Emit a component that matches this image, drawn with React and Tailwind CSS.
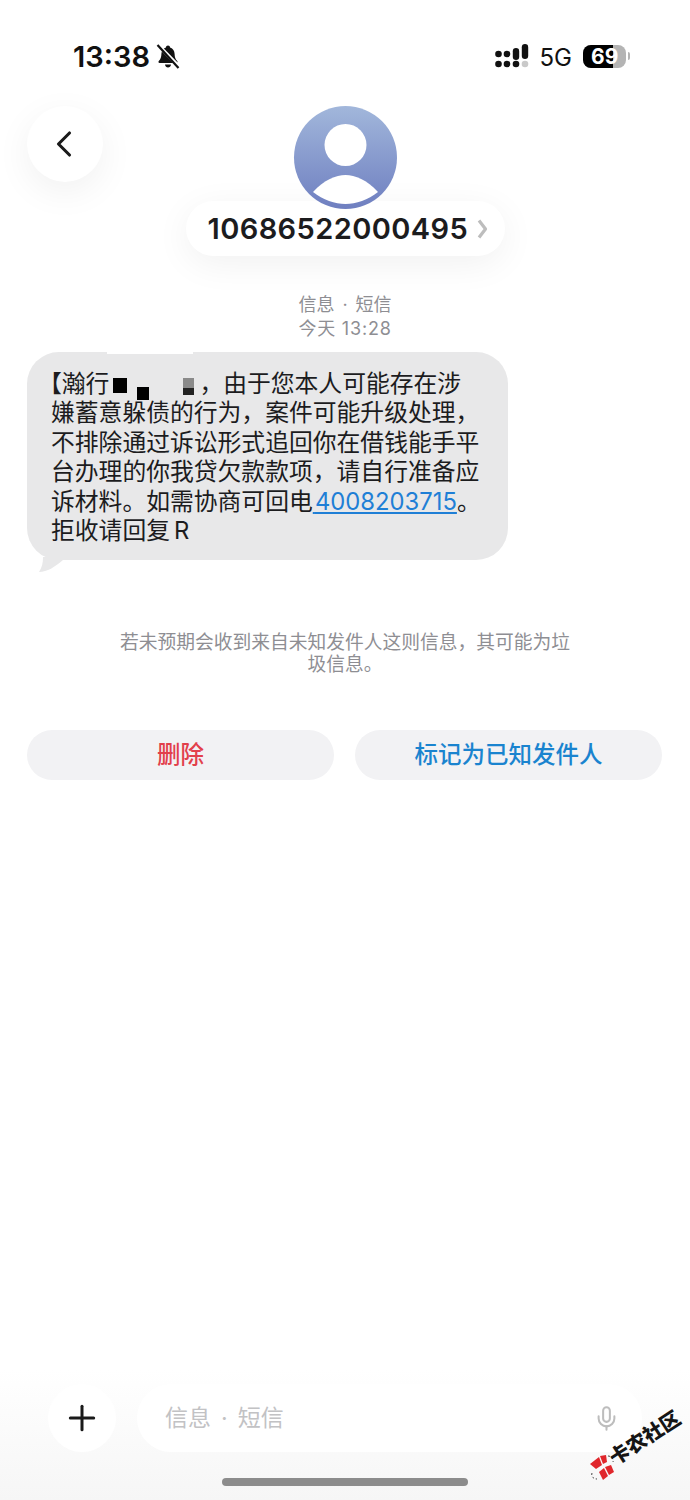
import { ChevronLeft, Mic, Plus } from 'lucide-react'

function BellSlash() {
  return (
    <svg width="24" height="25" viewBox="0 0 24 25" className="ml-[6px]">
      <path d="M12 1.500c-1.200 0-2 .8-2.100 1.900C6.900 4.200 5.600 6.800 5.400 10c-.1 2.800-.6 5-2.600 7-.8.8-.3 2 .8 2h16.800c1.100 0 1.600-1.200.8-2-2-2-2.500-4.200-2.600-7-.2-3.200-1.500-5.800-4.500-6.600C14 2.300 13.200 1.500 12 1.500z" fill="#111" />
      <path d="M9 20.500c.2 1.700 1.500 3 3 3s2.800-1.300 3-3z" fill="#111" />
      <path d="M2.500 1.500 23.500 23" stroke="#fff" strokeWidth="3.500" />
      <path d="M1.500 1 22.500 24" stroke="#111" strokeWidth="2.200" />
    </svg>
  )
}

function Signal() {
  return (
    <svg width="34" height="26" viewBox="0 0 34 26">
      <circle cx="3.500" cy="11" r="3.300" fill="#111" />
      <circle cx="3.500" cy="21" r="3.300" fill="#111" />
      <circle cx="12" cy="11" r="3.300" fill="#111" />
      <circle cx="12" cy="21" r="3.300" fill="#111" />
      <rect x="17.800" y="5" width="6.400" height="12" rx="3.200" fill="#111" />
      <circle cx="21" cy="21" r="3.300" fill="#111" />
      <rect x="26.800" y="1" width="6.400" height="15" rx="3.200" fill="#111" />
      <circle cx="30" cy="21" r="3.300" fill="#c9c9c9" />
    </svg>
  )
}

function Battery() {
  return (
    <div className="flex items-center">
      <div className="relative w-[43px] h-[23px] rounded-[8px] bg-[#b4b4b4] overflow-hidden">
        <div className="absolute left-0 top-0 bottom-0 w-[30px] bg-black" />
        <div className="absolute left-[8px] top-0 bottom-0 flex items-center text-white font-bold text-[21px] leading-none">69</div>
      </div>
      <div className="ml-[2px] w-[2px] h-[8px] rounded-r bg-[#b4b4b4]" />
    </div>
  )
}

function Avatar() {
  return (
    <div className="relative z-10 w-[103px] h-[103px] rounded-full overflow-hidden bg-gradient-to-b from-[#a2b7db] to-[#6f7fc0]">
      <svg width="103" height="103" viewBox="0 0 103 103">
        <circle cx="51.500" cy="39" r="21" fill="#fff" />
        <path d="M19 86C30 74 42 69 51.500 69 61 69 73 74 84 86 74 94 62 98 51.500 98 41 98 29 94 19 86z" fill="#fff" />
      </svg>
    </div>
  )
}

function Watermark() {
  return (
    <div className="absolute left-[584px] top-[1402px] w-[100px] h-[84px] pointer-events-none">
      <svg width="30" height="30" viewBox="0 0 30 30" className="absolute left-[3px] top-[50px]">
        <path d="M3 12 12 5l3 8-6 4z" fill="#e0262b" />
        <path d="M13 4 19 3l1 7-4 2z" fill="#e0262b" />
        <path d="M12 20 17 16l4 8-5 4z" fill="#e0262b" />
        <path d="M18 15 24 13l3 7-5 3z" fill="#e0262b" />
        <path d="M5 21c-1 3 1 6 5 6" fill="none" stroke="#444" strokeWidth="1" strokeDasharray="2 2" />
        <path d="M21 4c3 0 6 3 5 6" fill="none" stroke="#444" strokeWidth="1" strokeDasharray="2 2" />
      </svg>
      <div className="absolute left-[21px] top-[26px] -rotate-[33deg] origin-center whitespace-nowrap text-[20px] leading-none font-black text-[#151515]">卡农社区</div>
    </div>
  )
}

export default function App() {
  return (
    <div lang="zh-CN" className="relative w-[690px] h-[1500px] flex flex-col bg-white overflow-hidden text-[#111] font-[Inter,'Noto_Sans_CJK_SC',sans-serif]">
      <div className="h-[106px] shrink-0 pt-[40px] pl-[73px] pr-[60px] flex items-start justify-between">
        <div className="flex items-center h-[32px]">
          <span className="text-[29px] leading-none font-semibold">13:38</span>
          <BellSlash />
        </div>
        <div className="flex items-center h-[32px]">
          <Signal />
          <span className="ml-[11px] mr-[11px] mt-[3px] text-[24px] leading-none">5G</span>
          <Battery />
        </div>
      </div>

      <div className="grid grid-cols-[1fr_319px_1fr] px-[27px] shrink-0">
        <div>
          <div className="w-[76px] h-[76px] rounded-full bg-white flex items-center justify-center shadow-[0_10px_36px_rgba(0,0,0,0.06)]">
            <ChevronLeft size={44} strokeWidth={1.700} color="#1a1a1a" className="-ml-[3px]" />
          </div>
        </div>
        <div className="flex flex-col items-center">
          <Avatar />
          <div className="-mt-[8px] w-[319px] h-[55px] rounded-full bg-white flex items-center pl-[22px] shadow-[0_8px_36px_rgba(0,0,0,0.06)]">
            <span className="text-[29px] leading-none font-semibold tracking-[0.4px] text-[#1c1c1e]">10686522000495</span>
            <svg width="11" height="20" viewBox="0 0 11 20" className="ml-[9px] mt-[1px]">
              <path d="M2 1.500 8.500 10 2 18.500" fill="none" stroke="#bdbdbd" strokeWidth="3.200" strokeLinejoin="round" />
            </svg>
          </div>
        </div>
      </div>

      <div className="mt-[37px] text-center text-[18px] leading-[24px] text-[#8e8e93] shrink-0">
        <div>信息<span className="mx-[8px]">·</span>短信</div>
        <div className="tracking-[0.8px]">今天 13:28</div>
      </div>

      <div className="relative mt-[11px] ml-[27px] w-[481px] h-[208px] shrink-0 rounded-[32px] bg-[#e8e8e9] pl-[24px] pt-[17px] text-[23.800px] leading-[29.400px] text-[#1c1c1e] whitespace-nowrap">
        <div><span className="-ml-[13px]">【</span>瀚行<span className="inline-block w-[90px]"></span>，由于您本人可能存在涉</div>
        <div>嫌蓄意躲债的行为，案件可能升级处理，</div>
        <div>不排除通过诉讼形式追回你在借钱能手平</div>
        <div>台办理的你我贷欠款款项，请自行准备应</div>
        <div>诉材料。如需协商可回电<span className="text-[#1f7fd6] underline">{'\u200a'}4008203715</span>。</div>
        <div>拒收请回复<span className="ml-[4px]">R</span></div>
        <div className="absolute left-[80px] top-0 w-[86px] h-[2px] bg-white" />
        <div className="absolute left-[86px] top-[26px] w-[14px] h-[15px] bg-black" />
        <div className="absolute left-[110px] top-[35px] w-[12px] h-[13px] bg-black" />
        <div className="absolute left-[156px] top-[26px] w-[11px] h-[10px] bg-[#8a8a8a]" />
        <div className="absolute left-[156px] top-[36px] w-[11px] h-[7px] bg-[#222]" />
        <svg width="30" height="16" viewBox="0 0 30 16" className="absolute left-[8px] top-[205px]">
          <path d="M8 0C8 6 7 10 4 15 12 15 20 10 28 3V0z" fill="#e8e8e9" />
        </svg>
      </div>

      <div className="mt-[72px] mx-auto w-[455px] text-center text-[18.750px] leading-[22px] text-[#8e8e93] shrink-0">
        若未预期会收到来自未知发件人这则信息，其可能为垃圾信息。
      </div>

      <div className="mt-[54px] pl-[27px] pr-[28px] grid grid-cols-2 gap-[21px] shrink-0">
        <div className="h-[50px] rounded-full bg-[#f2f2f4] flex items-center justify-center text-[23.500px] font-medium text-[#e2404b]">删除</div>
        <div className="h-[50px] rounded-full bg-[#f2f2f4] flex items-center justify-center text-[23.500px] font-medium text-[#1a84cf]">标记为已知发件人</div>
      </div>

      <div className="mt-auto h-[130px] shrink-0 bg-gradient-to-b from-[#ffffff] to-[#f6f6f6] pt-[14px] pl-[48px] pr-[48px] flex flex-col">
        <div className="flex gap-[21px]">
          <div className="w-[68px] h-[68px] rounded-full bg-white flex items-center justify-center">
            <Plus size={40} strokeWidth={1.800} color="#1a1a1a" />
          </div>
          <div className="flex-1 h-[68px] rounded-full bg-white flex items-center justify-between pl-[28px] pr-[22px]">
            <span className="text-[23px] text-[#c2c2c4]">信息<span className="mx-[10px]">·</span>短信</span>
            <Mic size={27} strokeWidth={1.800} color="#bdbdbd" />
          </div>
        </div>
        <div className="mt-[26px] mx-auto w-[246px] h-[8px] rounded-full bg-[#8c8c8c]" />
      </div>

      <Watermark />
    </div>
  )
}
